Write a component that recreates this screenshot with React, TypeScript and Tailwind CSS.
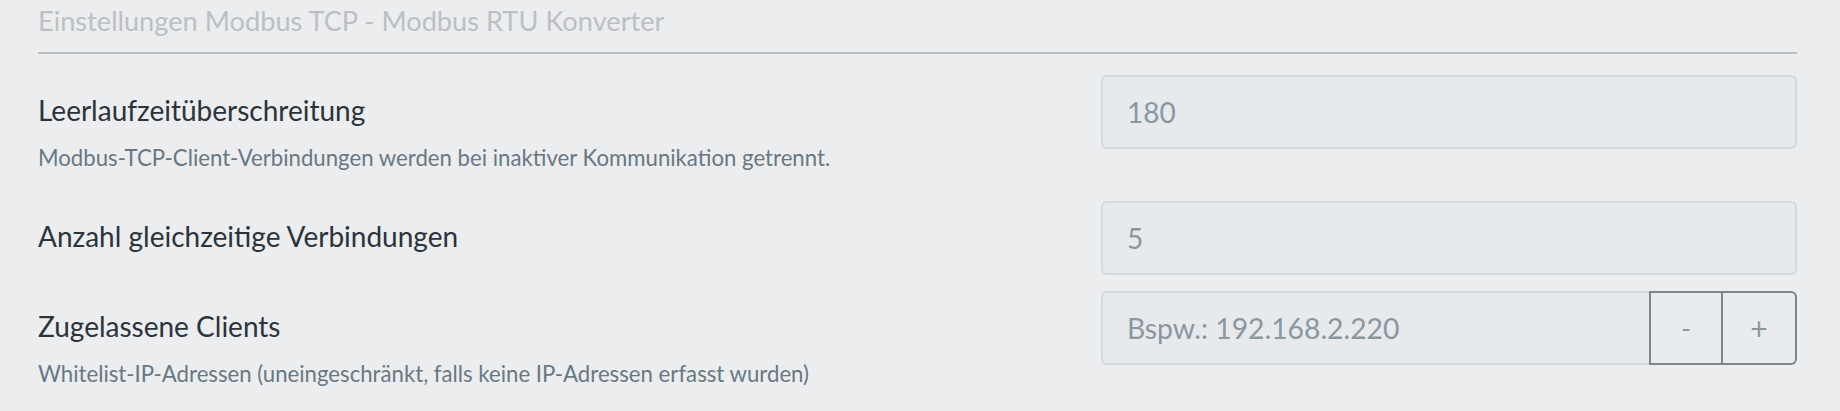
import React from 'react';

type Row = {
  label: string;
  hint?: string;
  value?: string;
  placeholder?: string;
  list?: boolean;
};

const rows: Row[] = [
  {
    label: 'Leerlaufzeitüberschreitung',
    hint: 'Modbus-TCP-Client-Verbindungen werden bei inaktiver Kommunikation getrennt.',
    value: '180',
  },
  { label: 'Anzahl gleichzeitige Verbindungen', value: '5' },
  {
    label: 'Zugelassene Clients',
    hint: 'Whitelist-IP-Adressen (uneingeschränkt, falls keine IP-Adressen erfasst wurden)',
    placeholder: 'Bspw.: 192.168.2.220',
    list: true,
  },
];

const FormRow: React.FC<{ row: Row }> = ({ row }) => (
  <div className="grid grid-cols-[1fr_696px]">
    <div className={row.hint ? 'pt-[14px] pb-[11px]' : 'pt-[14px]'}>
      <div className="text-[28px] leading-[42px] text-[#2b333b]">{row.label}</div>
      {row.hint && (
        <div className="mt-[10px] text-[22.2px] leading-[33px] text-[#687883]">{row.hint}</div>
      )}
    </div>

    {row.list ? (
      <div className="flex h-[74px]">
        <div className="flex flex-1 items-center rounded-l-[6px] border-2 border-r-0 border-[#d3d9de] bg-[#e7eaed] pl-[24px] text-[28.3px] text-[#8b979e]">
          {row.placeholder}
        </div>
        <div className="flex w-[74px] items-center justify-center border-2 border-[#7b868e] bg-[#e9ecee] text-[26px] text-[#8b979e]">
          -
        </div>
        <div className="flex w-[74px] items-center justify-center rounded-r-[6px] border-2 border-l-0 border-[#7b868e] bg-[#e9ecee] text-[30px] text-[#8b979e]">
          +
        </div>
      </div>
    ) : (
      <div className="flex h-[74px] items-center rounded-[6px] border-2 border-[#d3d9de] bg-[#e7eaed] pl-[24px] text-[28px] text-[#8b979e]">
        {row.value}
      </div>
    )}
  </div>
);

export default function App() {
  return (
    <div
      className="h-[411px] w-[1840px] overflow-hidden bg-[#ebedef] pl-[38px] pr-[43px]"
      style={{ fontFamily: 'Lato, "Noto Sans", sans-serif' }}
    >
      {/* Section header */}
      <h3 className="text-[27.2px] leading-[42px] text-[#bcc0c3]">
        Einstellungen Modbus TCP - Modbus RTU Konverter
      </h3>
      <div className="mt-[10px] border-t-2 border-[#bcc0c3]" />

      <div className="mt-[21px] flex flex-col gap-[16px]">
        {rows.map((r) => (
          <FormRow key={r.label} row={r} />
        ))}
      </div>
    </div>
  );
}
